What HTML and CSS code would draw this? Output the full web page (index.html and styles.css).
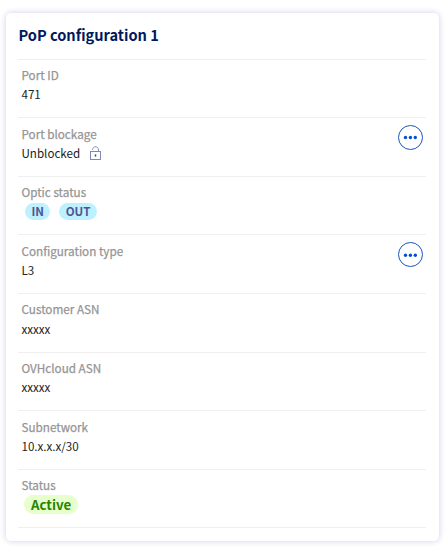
FILE: index.html
```html
<!DOCTYPE html>
<html lang="en">
<head>
<meta charset="utf-8">
<title>PoP configuration</title>
<link rel="stylesheet" href="styles.css">
</head>
<body>
<section class="card">
  <h1 class="title">PoP configuration 1</h1>
  <dl class="list">
    <div class="row"><dt>Port ID</dt><dd>471</dd></div>
    <div class="row">
      <dt>Port blockage</dt>
      <dd>Unblocked
        <svg class="lock" width="12" height="14" viewBox="0 0 12 14" fill="none" stroke="#8189b8"><rect x="0.5" y="5.5" width="10" height="8"/><path d="M2.5 3.8C2.7 1.8 3.9.8 5.5.8s3 1.1 3 3.1v1.6"/><path stroke="#3f4b91" stroke-width="1.5" d="M5.5 8.4v2.2"/></svg>
      </dd>
      <button class="more" aria-label="Actions"><svg width="15" height="5" viewBox="0 0 15 5" fill="#0050d7"><circle cx="2.5" cy="2.5" r="1.7"/><circle cx="7.4" cy="2.5" r="1.7"/><circle cx="12.3" cy="2.5" r="1.7"/></svg></button>
    </div>
    <div class="row"><dt>Optic status</dt><dd class="badges"><span class="badge">IN</span><span class="badge">OUT</span></dd></div>
    <div class="row">
      <dt>Configuration type</dt><dd>L3</dd>
      <button class="more" aria-label="Actions"><svg width="15" height="5" viewBox="0 0 15 5" fill="#0050d7"><circle cx="2.5" cy="3.3" r="1.7"/><circle cx="7.4" cy="3.3" r="1.7"/><circle cx="12.3" cy="3.3" r="1.7"/></svg></button>
    </div>
    <div class="row"><dt class="high">Customer ASN</dt><dd class="low">xxxxx</dd></div>
    <div class="row"><dt>OVHcloud ASN</dt><dd>xxxxx</dd></div>
    <div class="row"><dt>Subnetwork</dt><dd>10.x.x.x/30</dd></div>
    <div class="row"><dt>Status</dt><dd class="badges"><span class="badge active">Active</span></dd></div>
  </dl>
</section>
</body>
</html>
```
FILE: styles.css
```css
* { box-sizing: border-box; }
body {
  margin: 0;
  padding: 13px 6px 10px;
  background: #fff;
  font-family: "Noto Sans CJK SC", "Noto Sans", sans-serif;
  font-size: 12px;
  color: #222;
}
.card {
  width: 433px;
  height: 528px;
  padding: 11px 13px 0 12px;
  border-radius: 5px;
  background: #fff;
  box-shadow: 0 0 6px rgba(0, 0, 160, 0.2);
}
.title {
  margin: 0;
  height: 34.8px;
  padding-left: 0.4px;
  font-size: 14.6px;
  font-weight: 700;
  line-height: 22px;
  color: #00185e;
}
.list { margin: 0; border-bottom: 1px solid #efefef; }
.row {
  display: grid;
  grid-template-columns: 1fr 25px;
  grid-template-rows: 19px 20px;
  height: 58.55px;
  padding: 5.6px 3px 0 3.5px;
  border-top: 1px solid #efefef;
}
dt { font-size: 11.7px; line-height: 19px; color: #959595; -webkit-text-stroke: 0.25px #959595; }
dd { display: flex; align-items: center; gap: 10px; margin: 0; grid-column: 1; font-size: 11.6px; line-height: 20px; }
.high { margin-top: -1px; }
.low { padding-top: 1px; }
.lock { display: block; }
.more {
  grid-column: 2;
  grid-row: 1 / 3;
  display: grid;
  place-items: center;
  width: 25px;
  height: 25px;
  margin-top: 0.8px;
  padding: 0;
  border: 1px solid #1d55bd;
  border-radius: 50%;
  background: #fff;
}
.badges { gap: 9px; padding-left: 3.5px; }
.badge {
  height: 17px;
  padding: 0 6.4px;
  border-radius: 9px;
  background: #bef1ff;
  color: #4d5592;
  font-weight: 700;
  line-height: 17px;
}
.active {
  height: 19px;
  margin-left: -1px;
  padding: 0 7px;
  border-radius: 10px;
  background: #e7ffcc;
  color: #268403;
  font-size: 13.3px;
  line-height: 19px;
}
```
